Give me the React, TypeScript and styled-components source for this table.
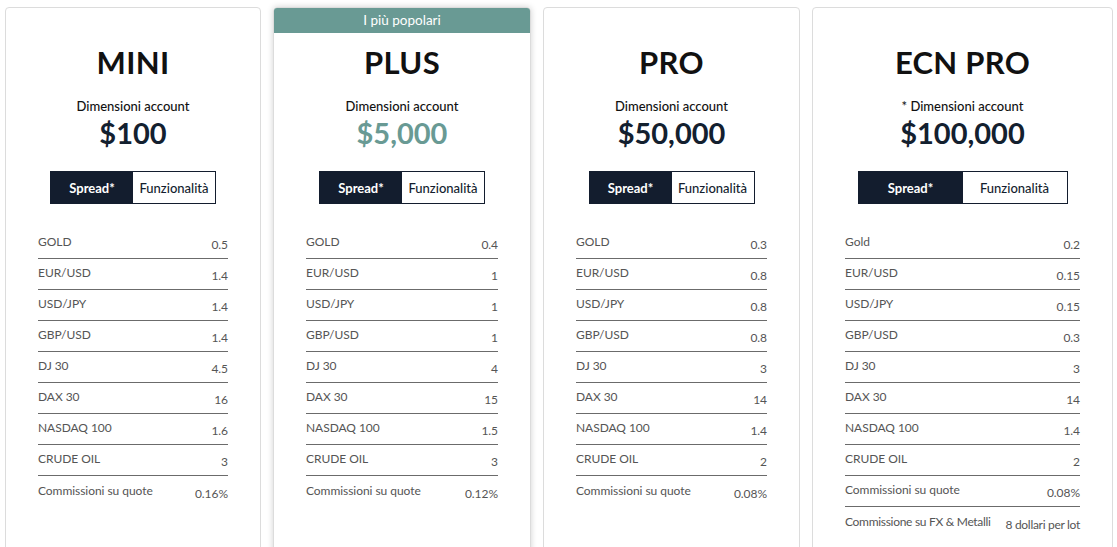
import React from 'react';
import styled, { createGlobalStyle } from 'styled-components';

const GlobalStyle = createGlobalStyle`
    body {
        margin: 0;
        background: #fff;
        font-family: Lato, "Liberation Sans", sans-serif;
    }
`

const Page = styled.div`
    display: grid;
    grid-template-columns: 256px 258px 257px 301px;
    column-gap: 12px;
    padding: 7px 0 0 5px;
    height: 547px;
    overflow: hidden;
    box-sizing: border-box;
`

interface CardProps {
    popular?: boolean;
}

const Card = styled.div<CardProps>`
    border: 1px solid #dcdcdc;
    border-radius: 4px;
    height: 580px;
    display: flex;
    flex-direction: column;
    align-items: center;
    box-shadow: ${p => p.popular ? '0 0 6px rgba(0,0,0,.18)' : 'none'};
    overflow: hidden;
    box-sizing: border-box;
`

const Ribbon = styled.div<CardProps>`
    width: 100%;
    height: 25px;
    line-height: 25px;
    text-align: center;
    font-size: 13.5px;
    color: #fff;
    background: ${p => p.popular ? '#699a94' : 'transparent'};
    visibility: ${p => p.popular ? 'visible' : 'hidden'};
`

const Title = styled.h2`
    margin: 7px 0 0;
    font-size: 31px;
    line-height: 44px;
    font-weight: 700;
    color: #111;
    letter-spacing: 0.3px;
`

const SizeLabel = styled.div`
    margin-top: 13px;
    font-size: 13px;
    line-height: 18px;
    font-weight: 500;
    color: #111;
`

const Price = styled.div<CardProps>`
    font-size: 29px;
    line-height: 36px;
    font-weight: 700;
    color: ${p => p.popular ? '#699a94' : '#13202f'};
`

const Tabs = styled.div<{ wide?: boolean }>`
    margin-top: 20px;
    display: flex;
    border: 1px solid #131d2e;
    height: 33px;
    box-sizing: border-box;
    width: ${p => p.wide ? '210px' : '166px'};
`

const Tab = styled.div<{ active?: boolean }>`
    flex: 1;
    display: flex;
    align-items: center;
    justify-content: center;
    font-size: 13px;
    font-weight: ${p => p.active ? 700 : 500};
    color: ${p => p.active ? '#fff' : '#131d2e'};
    background: ${p => p.active ? '#131d2e' : '#fff'};
`

const Table = styled.div`
    margin-top: 24px;
    align-self: stretch;
    padding: 0 32px 0 32px;
`

const Row = styled.div<{ last?: boolean; tight?: boolean }>`
    height: 31px;
    display: flex;
    align-items: center;
    justify-content: space-between;
    gap: 8px;
    box-sizing: border-box;
    padding-bottom: 1px;
    border-bottom: ${p => p.last ? 'none' : '1px solid #6b6b6b'};
    font-size: 12px;
    letter-spacing: ${p => p.tight ? '-0.3px' : '-0.05px'};
    color: #555;
    white-space: nowrap;
`

const Label = styled.span`
    margin-top: -2px;
`

const Value = styled.span`
    padding-top: 4px;
`

interface Plan {
    name: string;
    size: string;
    price: string;
    popular?: boolean;
    wide?: boolean;
    rows: [string, string][];
}

const labels = ['GOLD', 'EUR/USD', 'USD/JPY', 'GBP/USD', 'DJ 30', 'DAX 30', 'NASDAQ 100', 'CRUDE OIL', 'Commissioni su quote']

const zip = (vals: string[], first = 'GOLD'): [string, string][] =>
    vals.map((v, i) => [i === 0 ? first : labels[i], v])

const plans: Plan[] = [
    { name: 'MINI', size: 'Dimensioni account', price: '$100', rows: zip(['0.5', '1.4', '1.4', '1.4', '4.5', '16', '1.6', '3', '0.16%']) },
    { name: 'PLUS', size: 'Dimensioni account', price: '$5,000', popular: true, rows: zip(['0.4', '1', '1', '1', '4', '15', '1.5', '3', '0.12%']) },
    { name: 'PRO', size: 'Dimensioni account', price: '$50,000', rows: zip(['0.3', '0.8', '0.8', '0.8', '3', '14', '1.4', '2', '0.08%']) },
    {
        name: 'ECN PRO', size: '* Dimensioni account', price: '$100,000', wide: true,
        rows: [...zip(['0.2', '0.15', '0.15', '0.3', '3', '14', '1.4', '2', '0.08%'], 'Gold'), ['Commissione su FX & Metalli', '8 dollari per lot']]
    },
]

const App: React.FC = () => {
    return (<>
        <GlobalStyle />
        <Page>
            {plans.map(plan => (
                <Card key={plan.name} popular={plan.popular}>
                    <Ribbon popular={plan.popular}>I più popolari</Ribbon>
                    <Title>{plan.name}</Title>
                    <SizeLabel>{plan.size}</SizeLabel>
                    <Price popular={plan.popular}>{plan.price}</Price>
                    <Tabs wide={plan.wide}>
                        <Tab active>Spread*</Tab>
                        <Tab>Funzionalità</Tab>
                    </Tabs>
                    <Table>
                        {plan.rows.map(([label, value], i) => (
                            <Row key={label} last={i === plan.rows.length - 1} tight={label.length > 22}>
                                <Label>{label}</Label>
                                <Value>{value}</Value>
                            </Row>
                        ))}
                    </Table>
                </Card>
            ))}
        </Page>
    </>)
}

export default App;
